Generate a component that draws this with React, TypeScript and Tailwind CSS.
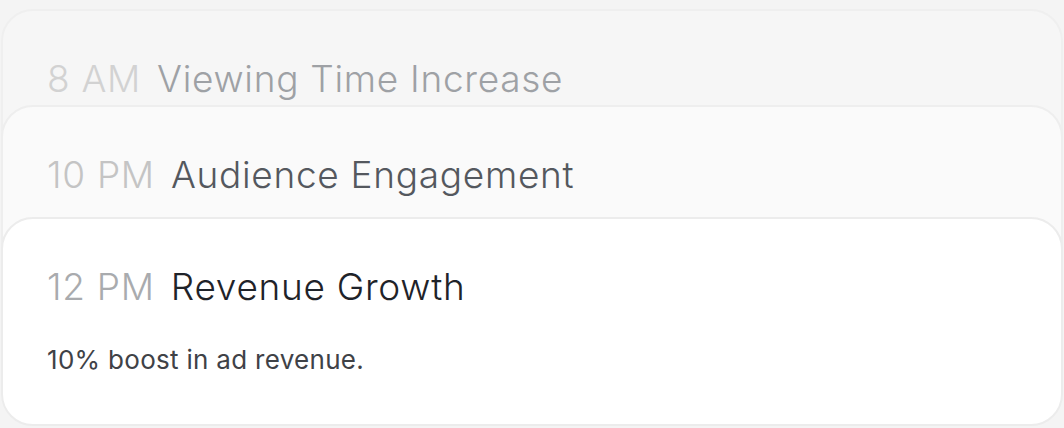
import React from 'react'

type Entry = {
  time: string
  title: string
  body?: string
  card: string
  timeColor: string
  titleColor: string
  offset: string
}

const entries: Entry[] = [
  {
    time: '8 AM',
    title: 'Viewing Time Increase',
    card: 'bg-[#f6f6f6] border-[#efefef]',
    timeColor: 'text-[#d2d2d2]',
    titleColor: 'text-[#9ea1a5]',
    offset: '',
  },
  {
    time: '10 PM',
    title: 'Audience Engagement',
    card: 'bg-[#fafafa] border-[#eeeeee]',
    timeColor: 'text-[#c4c4c4]',
    titleColor: 'text-[#54585e]',
    offset: 'mt-[-113px]',
  },
  {
    time: '12 PM',
    title: 'Revenue Growth',
    body: '10% boost in ad revenue.',
    card: 'bg-white border-[#ececec]',
    timeColor: 'text-[#a9abae]',
    titleColor: 'text-[#1f2329]',
    offset: 'mt-[-97px]',
  },
]

export default function App() {
  return (
    <div
      className="w-[1064px] h-[428px] bg-[#f4f4f4] px-[1px] pt-[9px] overflow-hidden"
      style={{ fontFamily: 'Inter, "Open Sans", sans-serif' }}
    >
      <div className="flex flex-col">
        {entries.map((e) => (
          <div
            key={e.time}
            className={`relative h-[209px] rounded-[32px] border-2 px-[44px] pt-[44px] ${e.card} ${e.offset}`}
          >
            <div className="flex items-baseline gap-[16px] leading-[48px] tracking-[0.7px]">
              <span className={`text-[37px] font-light ${e.timeColor}`}>{e.time}</span>
              <span className={`text-[37px] font-light ${e.titleColor}`}>{e.title}</span>
            </div>
            {e.body && (
              <p className="mt-[33px] text-[26px] leading-[32px] text-[#3f4247] tracking-[0.3px]">
                {e.body}
              </p>
            )}
          </div>
        ))}
      </div>
    </div>
  )
}
